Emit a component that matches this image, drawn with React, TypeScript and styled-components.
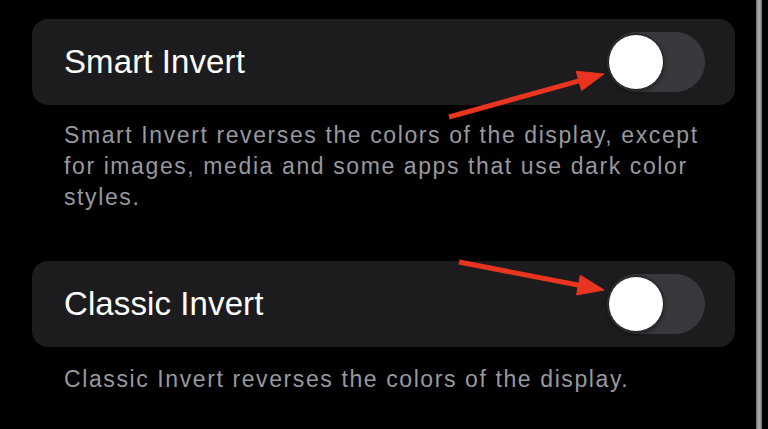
import React from "react";
import styled, { createGlobalStyle } from "styled-components";

const GlobalStyle = createGlobalStyle`
  html, body {
    margin: 0;
    padding: 0;
    background: #000;
  }
  body {
    width: 768px;
    height: 429px;
    overflow: hidden;
    font-family: "Liberation Sans", Arial, sans-serif;
  }
`;

const Screen = styled.div`
  position: relative;
  display: flex;
  width: 768px;
  height: 429px;
  background: #000;
`;

const Content = styled.div`
  flex: 1;
  display: flex;
  flex-direction: column;
  padding: 19px 21px 0 32px;
`;

/* the grey strip on the right edge of the screenshot */
const EdgeStrip = styled.div`
  width: 6px;
  margin-right: 6px;
  background: linear-gradient(90deg, #6f6f6f, #b4b4b4 50%, #6f6f6f);
`;

const Section = styled.section<{ $gap?: number }>`
  display: flex;
  flex-direction: column;
  margin-bottom: ${(p) => p.$gap ?? 0}px;
`;

const Row = styled.div`
  display: flex;
  align-items: center;
  justify-content: space-between;
  height: 86px;
  padding: 0 30px 0 32px;
  background: #1c1c1e;
  border-radius: 16px;
`;

const Title = styled.span`
  color: #fff;
  font-size: 33px;
  letter-spacing: 0.1px;
`;

const Footer = styled.p<{ $top: number }>`
  margin: ${(p) => p.$top}px 0 0 32px;
  color: #98989e;
  font-size: 23px;
  letter-spacing: 1.6px;
  line-height: 31px;
  max-width: 660px;
`;

const Track = styled.div`
  display: flex;
  align-items: center;
  width: 98px;
  height: 60px;
  border-radius: 30px;
  background: #39393d;
`;

const Knob = styled.div`
  width: 54px;
  height: 54px;
  margin-left: 1px;
  border-radius: 50%;
  background: #fff;
  border: 1.5px solid #1a1a1a;
  box-shadow: 0 0 0 1px #2e2e30, 0 2px 4px rgba(0, 0, 0, 0.5);
`;

const Annotations = styled.svg`
  position: absolute;
  inset: 0;
  pointer-events: none;
`;

type Arrow = { x1: number; y1: number; x2: number; y2: number };

const ARROWS: Arrow[] = [
  { x1: 449, y1: 117, x2: 604, y2: 74 },
  { x1: 459, y1: 262, x2: 604, y2: 290 },
];

const ArrowMark = ({ x1, y1, x2, y2 }: Arrow) => {
  const dx = x2 - x1;
  const dy = y2 - y1;
  const len = Math.hypot(dx, dy);
  const ux = dx / len;
  const uy = dy / len;
  const head = 26;
  const half = 10;
  const bx = x2 - ux * head;
  const by = y2 - uy * head;
  const points = [
    `${x2},${y2}`,
    `${bx - uy * half},${by + ux * half}`,
    `${bx + uy * half},${by - ux * half}`,
  ].join(" ");
  return (
    <g fill="#e9351f" stroke="#e9351f">
      <line x1={x1} y1={y1} x2={bx + ux * 2} y2={by + uy * 2} strokeWidth={5} />
      <polygon points={points} strokeWidth={1} strokeLinejoin="round" />
    </g>
  );
};

const Toggle = () => (
  <Track>
    <Knob />
  </Track>
);

export default function App() {
  return (
    <>
      <GlobalStyle />
      <Screen>
        <Content>
          <Section $gap={48}>
            <Row>
              <Title>Smart Invert</Title>
              <Toggle />
            </Row>
            <Footer $top={15}>
              Smart Invert reverses the colors of the display, except for images, media and some apps that use dark
              color styles.
            </Footer>
          </Section>
          <Section>
            <Row>
              <Title>Classic Invert</Title>
              <Toggle />
            </Row>
            <Footer $top={17}>Classic Invert reverses the colors of the display.</Footer>
          </Section>
        </Content>
        <EdgeStrip />
        <Annotations width={768} height={429} viewBox="0 0 768 429">
          {ARROWS.map((a, i) => (
            <ArrowMark key={i} {...a} />
          ))}
        </Annotations>
      </Screen>
    </>
  );
}
